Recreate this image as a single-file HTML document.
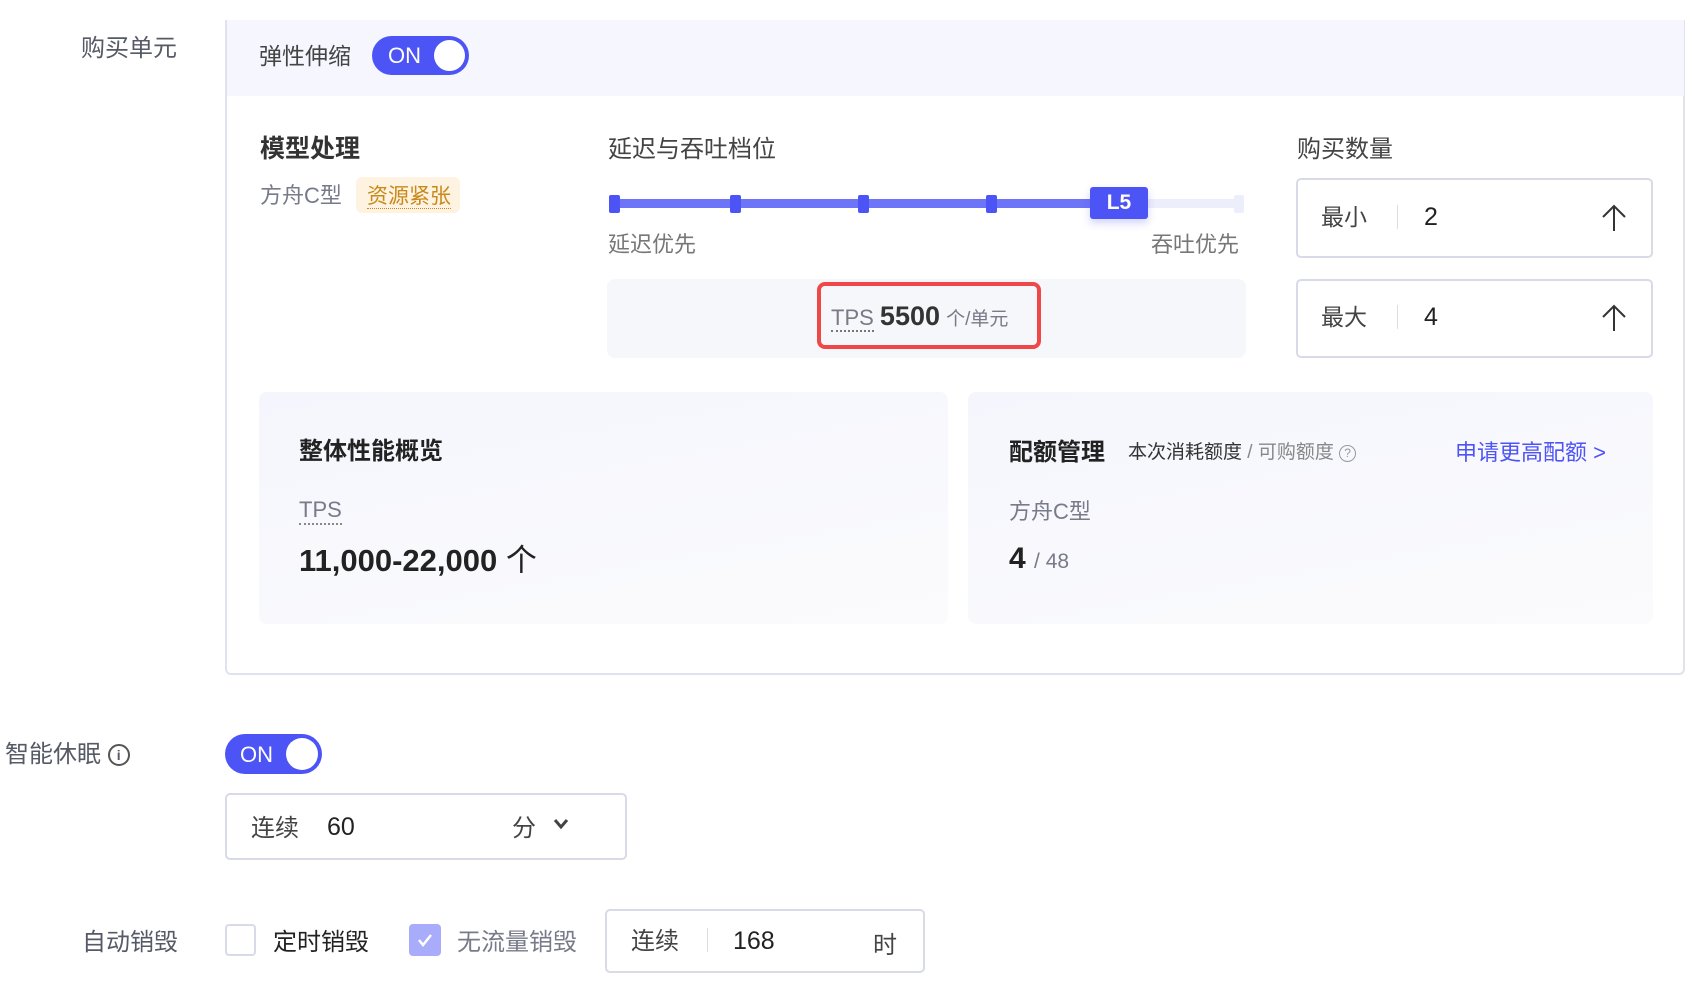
<!DOCTYPE html>
<html><head><meta charset="utf-8"><style>
*{box-sizing:border-box;margin:0;padding:0}
body{width:1694px;height:994px;background:#fff;font-family:"Liberation Sans","Noto Sans CJK SC",sans-serif;color:#333;position:relative;overflow:hidden}
.a{position:absolute;white-space:nowrap}
.lbl{font-size:24px;color:#555a66}
.tog{position:absolute;background:#4d54f5;border-radius:20px;color:#fff;font-size:22px}
.tog .k{position:absolute;background:#fff;border-radius:50%}
.inp{position:absolute;border:2px solid #d8dae8;border-radius:5px;background:#fff}
</style></head><body>
<div class="a lbl" style="left:81px;top:28px">购买单元</div>
<div class="a" style="left:225px;top:20px;width:1460px;height:655px;border:2px solid #e0e3ee;border-top:none;border-radius:0 0 6px 6px"></div>
<div class="a" style="left:227px;top:20px;width:1457px;height:76px;background:#f5f6fe"></div>
<div class="a lbl" style="left:259px;top:37px;font-size:23px;color:#444">弹性伸缩</div>
<div class="tog" style="left:372px;top:36px;width:97px;height:39px"><span class="a" style="left:16px;top:7px">ON</span><div class="k" style="left:62px;top:4px;width:31px;height:31px"></div></div>

<div class="a" style="left:260px;top:129px;font-size:25px;font-weight:bold;color:#333">模型处理</div>
<div class="a" style="left:260px;top:178px;font-size:22px;color:#777a88">方舟C型</div>
<div class="a" style="left:356px;top:177px;width:104px;height:36px;background:#fdf3e0;border-radius:6px;color:#c8891a;font-size:21px;padding:3px 0 0 11px"><span style="border-bottom:1px dotted #c8891a">资源紧张</span></div>

<div class="a" style="left:608px;top:129px;font-size:24px;color:#444">延迟与吞吐档位</div>
<div class="a" style="left:614px;top:199px;width:476px;height:9px;background:#6e74f7"></div>
<div class="a" style="left:1148px;top:199px;width:92px;height:9px;background:#eceefb"></div>
<div class="a" style="left:609px;top:195px;width:11px;height:18px;background:#4d54f5;border-radius:2px"></div>
<div class="a" style="left:730px;top:195px;width:11px;height:18px;background:#4d54f5;border-radius:2px"></div>
<div class="a" style="left:858px;top:195px;width:11px;height:18px;background:#4d54f5;border-radius:2px"></div>
<div class="a" style="left:986px;top:195px;width:11px;height:18px;background:#4d54f5;border-radius:2px"></div>
<div class="a" style="left:1234px;top:195px;width:10px;height:18px;background:#eceefb;border-radius:2px"></div>
<div class="a" style="left:1090px;top:187px;width:58px;height:32px;background:#4d54f5;border-radius:3px;color:#fff;font-size:21px;font-weight:bold;text-align:center;line-height:32px;box-shadow:0 4px 8px rgba(77,84,245,.25)">L5</div>
<div class="a" style="left:608px;top:227px;font-size:22px;color:#777">延迟优先</div>
<div class="a" style="left:1151px;top:227px;font-size:22px;color:#777">吞吐优先</div>
<div class="a" style="left:607px;top:279px;width:639px;height:79px;background:#f6f7fa;border-radius:8px"></div>
<div class="a" style="left:817px;top:282px;width:224px;height:67px;border:4px solid #f04848;border-radius:8px"></div>
<div class="a" style="left:831px;top:301px;font-size:22px;color:#777a88"><span style="border-bottom:2px dotted #777">TPS</span> <span style="font-size:27px;font-weight:bold;color:#333">5500</span> <span style="font-size:19px">个/单元</span></div>

<div class="a" style="left:1297px;top:129px;font-size:24px;color:#444">购买数量</div>
<div class="inp" style="left:1296px;top:178px;width:357px;height:80px"></div>
<div class="inp" style="left:1296px;top:279px;width:357px;height:79px"></div>
<div class="a" style="left:1321px;top:198px;font-size:23px;color:#444">最小</div>
<div class="a" style="left:1397px;top:205px;width:1px;height:24px;background:#ddd"></div>
<div class="a" style="left:1424px;top:203px;font-size:25px;color:#222">2</div>
<div class="a" style="left:1321px;top:298px;font-size:23px;color:#444">最大</div>
<div class="a" style="left:1397px;top:305px;width:1px;height:24px;background:#ddd"></div>
<div class="a" style="left:1424px;top:303px;font-size:25px;color:#222">4</div>
<svg class="a" style="left:1600px;top:203px" width="28" height="30"><path d="M14 3V28M3 14L14 3L25 14" fill="none" stroke="#333" stroke-width="2"/></svg>
<svg class="a" style="left:1600px;top:303px" width="28" height="30"><path d="M14 3V28M3 14L14 3L25 14" fill="none" stroke="#333" stroke-width="2"/></svg>

<div class="a" style="left:259px;top:392px;width:689px;height:232px;background:linear-gradient(170deg,#f5f6fd,#fbfbfd);border-radius:8px"></div>
<div class="a" style="left:968px;top:392px;width:685px;height:232px;background:linear-gradient(170deg,#f5f6fd,#fbfbfd);border-radius:8px"></div>
<div class="a" style="left:299px;top:431px;font-size:24px;font-weight:bold;color:#222">整体性能概览</div>
<div class="a" style="left:299px;top:497px;font-size:22px;color:#777a88;border-bottom:2px dotted #888">TPS</div>
<div class="a" style="left:299px;top:535px;font-size:31px;font-weight:bold;color:#222">11,000-22,000 <span style="font-weight:normal">个</span></div>
<div class="a" style="left:1009px;top:432px;font-size:24px;font-weight:bold;color:#222">配额管理</div>
<div class="a" style="left:1128px;top:437px;font-size:19px;color:#333">本次消耗额度 <span style="color:#888">/ 可购额度</span> <span style="display:inline-block;width:17px;height:17px;border:1.5px solid #999;border-radius:50%;font-size:12px;text-align:center;line-height:15px;color:#999;vertical-align:1px">?</span></div>
<div class="a" style="left:1455px;top:435px;font-size:22px;color:#4d54f5">申请更高配额 &gt;</div>
<div class="a" style="left:1009px;top:494px;font-size:22px;color:#777a88">方舟C型</div>
<div class="a" style="left:1009px;top:542px;font-size:30px;font-weight:bold;color:#222">4 <span style="font-size:21px;font-weight:normal;color:#777a88">/ 48</span></div>

<div class="a lbl" style="left:5px;top:734px">智能休眠 <span style="display:inline-block;width:22px;height:22px;border:2px solid #555;border-radius:50%;font-size:14px;text-align:center;line-height:18px;vertical-align:2px;font-weight:bold">i</span></div>
<div class="tog" style="left:225px;top:734px;width:97px;height:40px"><span class="a" style="left:15px;top:8px">ON</span><div class="k" style="left:61px;top:4px;width:32px;height:32px"></div></div>
<div class="inp" style="left:225px;top:793px;width:402px;height:67px"></div>
<div class="a" style="left:251px;top:808px;font-size:24px;color:#444">连续</div>
<div class="a" style="left:327px;top:813px;font-size:25px;color:#222">60</div>
<div class="a" style="left:512px;top:808px;font-size:24px;color:#444">分</div>
<svg class="a" style="left:553px;top:817px" width="16" height="14"><path d="M2 3L8 10L14 3" fill="none" stroke="#444" stroke-width="3"/></svg>

<div class="a lbl" style="left:82px;top:922px">自动销毁</div>
<div class="a" style="left:225px;top:924px;width:31px;height:32px;border:2px solid #d8dae8;border-radius:4px;background:#fff"></div>
<div class="a" style="left:273px;top:922px;font-size:24px;color:#222">定时销毁</div>
<div class="a" style="left:409px;top:924px;width:32px;height:32px;background:#a9acfa;border-radius:4px"><svg width="32" height="32"><path d="M10 16L14 21L22 11" fill="none" stroke="#fff" stroke-width="2.5"/></svg></div>
<div class="a" style="left:457px;top:922px;font-size:24px;color:#777a88">无流量销毁</div>
<div class="inp" style="left:605px;top:909px;width:320px;height:64px"></div>
<div class="a" style="left:631px;top:921px;font-size:24px;color:#444">连续</div>
<div class="a" style="left:707px;top:928px;width:1px;height:24px;background:#ddd"></div>
<div class="a" style="left:733px;top:927px;font-size:25px;color:#222">168</div>
<div class="a" style="left:873px;top:925px;font-size:24px;color:#444">时</div>
</body></html>
